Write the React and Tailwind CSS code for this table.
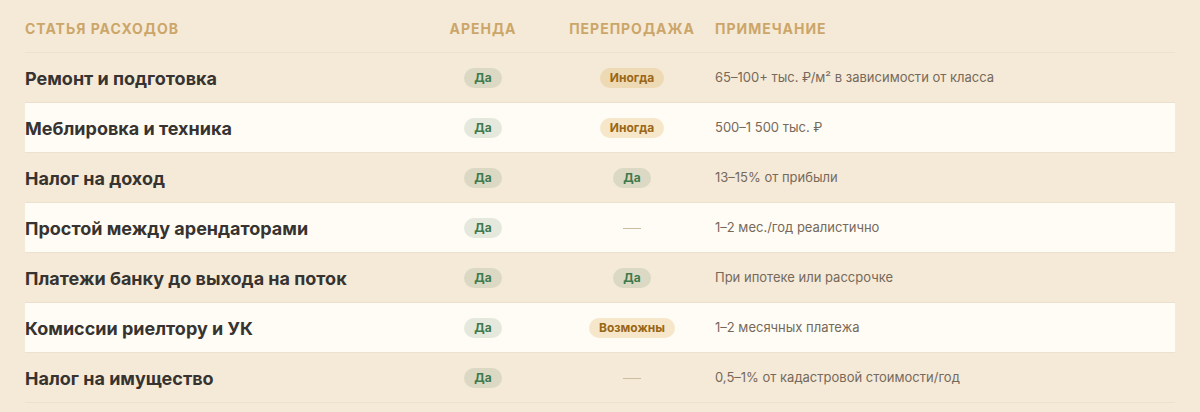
import React from "react";

const rows = [
  { title: "Ремонт и подготовка", resale: { kind: "warn", text: "Иногда" }, note: "65–100+ тыс. ₽/м² в зависимости от класса" },
  { title: "Меблировка и техника", resale: { kind: "warn", text: "Иногда" }, note: "500–1 500 тыс. ₽" },
  { title: "Налог на доход", resale: { kind: "yes", text: "Да" }, note: "13–15% от прибыли" },
  { title: "Простой между арендаторами", resale: null, note: "1–2 мес./год реалистично" },
  { title: "Платежи банку до выхода на поток", resale: { kind: "yes", text: "Да" }, note: "При ипотеке или рассрочке" },
  { title: "Комиссии риелтору и УК", resale: { kind: "warn", text: "Возможны" }, note: "1–2 месячных платежа" },
  { title: "Налог на имущество", resale: null, note: "0,5–1% от кадастровой стоимости/год" },
];

const Badge = ({ kind, text }) => {
  if (kind === "yes") {
    return (
      <span className="inline-flex h-[20px] items-center rounded-full bg-[#4a7c59]/15 px-[10px] text-[12px] font-bold text-[#3e7a4c]">
        {text}
      </span>
    );
  }
  return (
    <span className="inline-flex h-[20px] items-center rounded-full bg-[#dca64a]/25 px-[10px] text-[12px] font-bold text-[#996717]">
      {text}
    </span>
  );
};

const Dash = () => <span className="block h-px w-[18px] bg-[#cbbd9f]" />;

export default function App() {
  return (
    <div className="min-h-[412px] w-full bg-[#f5ead8] px-[25px] font-['Inter',sans-serif]">
      {/* Header */}
      <div className="grid h-[53px] grid-cols-[392px_132px_166px_1fr] items-end border-b border-[#ede1cd] pb-[13px] text-[14px] font-bold uppercase tracking-[0.07em] text-[#cca669]">
        <div>Статья расходов</div>
        <div className="text-center">Аренда</div>
        <div className="text-center">Перепродажа</div>
        <div>Примечание</div>
      </div>

      {rows.map((r, i) => (
        <div
          key={i}
          className={
            "grid h-[50px] grid-cols-[392px_132px_166px_1fr] items-center border-b border-[#ede1cd] " +
            (i % 2 === 1 ? "bg-[#fffcf5]" : "")
          }
        >
          <div className="pt-[2px] text-[18px] font-bold text-[#363330]">{r.title}</div>
          <div className="flex justify-center pt-[1px]">
            <Badge kind="yes" text="Да" />
          </div>
          <div className="flex justify-center pt-[1px]">
            {r.resale ? <Badge kind={r.resale.kind} text={r.resale.text} /> : <Dash />}
          </div>
          <div className="pt-[1px] text-[13px] text-[#76695a]">{r.note}</div>
        </div>
      ))}
    </div>
  );
}
